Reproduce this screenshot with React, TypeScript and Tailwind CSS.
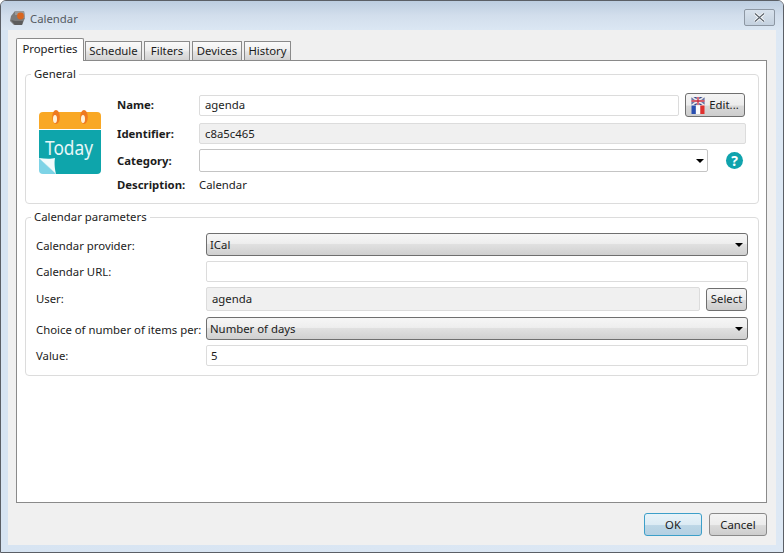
import React from "react";

const ff = "font-['Noto_Sans','Open_Sans',sans-serif]";
const gloss = "bg-[linear-gradient(#f6f6f6_0%,#eeeeee_45%,#e0e0e0_50%,#d0d0d0_100%)]";

function Tab({ label, w, active }: { label: string; w: string; active?: boolean }) {
  if (active)
    return (
      <div className={`${w} h-[23px] mr-[1px] relative z-10 bg-white border border-[#8a8a8a] border-b-0 rounded-t-[2px] flex justify-center pt-[1px] text-[#1c1c1c]`}>
        {label}
      </div>
    );
  return (
    <div className={`${w} h-[19px] mt-[3px] mr-[2px] border border-[#8a8a8a] border-b-0 rounded-t-[1px] bg-[linear-gradient(#fafafa_0%,#f0f0f0_45%,#e4e4e4_55%,#d2d2d2_100%)] flex justify-center items-center pb-[1px] text-[#1c1c1c]`}>
      {label}
    </div>
  );
}

function Input({ value, className = "", disabled }: { value?: string; className?: string; disabled?: boolean }) {
  return (
    <div className={`${className} border border-[#dcdcdc] rounded-[2px] flex items-center ${disabled ? "bg-[#f0f0f0]" : "bg-white"} text-[#1c1c1c]`}>
      {value}
    </div>
  );
}

function Caret() {
  return <div className="w-0 h-0 border-x-[4px] border-x-transparent border-t-[4px] border-t-black" />;
}

function DropSelect({ value, className = "" }: { value: string; className?: string }) {
  return (
    <div className={`${className} h-[23px] w-[542px] border border-[#6f6f6f] rounded-[3px] ${gloss} flex items-center justify-between pt-[1px] pl-[3px] pr-[4px] text-[#1c1c1c]`}>
      <span>{value}</span>
      <Caret />
    </div>
  );
}

function Flag() {
  return (
    <svg width="14" height="17" viewBox="0 0 14 17">
      <rect x="0.5" y="0" width="13" height="8" rx="1" fill="#3a4a8c" />
      <path d="M1 0l12 8M13 0L1 8" stroke="#e8e8e8" strokeWidth="1.6" />
      <path d="M7 0v8M0.5 4h13" stroke="#f4f4f4" strokeWidth="2.6" />
      <path d="M7 0v8M0.5 4h13" stroke="#c8283c" strokeWidth="1.3" />
      <rect x="0.5" y="8.5" width="4.4" height="8.5" fill="#2a4fb0" />
      <rect x="4.9" y="8.5" width="4.4" height="8.5" fill="#fbfbfb" />
      <rect x="9.3" y="8.5" width="4.2" height="8.5" fill="#e0312f" />
    </svg>
  );
}

function CalendarIcon() {
  return (
    <svg width="62" height="65" viewBox="0 0 62 65" className="block">
      <path d="M0 7a4 4 0 0 1 4-4h54a4 4 0 0 1 4 4v13H0z" fill="#f9a825" />
      <path d="M0 21h62v40a4 4 0 0 1-4 4H17L0 49z" fill="#0ea5ab" />
      <path d="M0 49l17 16H4a4 4 0 0 1-4-4z" fill="#7dd3e6" />
      <path d="M0 49c6 1 13 1 16 0-1 5 0 12 1 16z" fill="#f2fbfc" />
      <ellipse cx="17" cy="8" rx="3.800" ry="7" fill="#ef7a22" />
      <ellipse cx="45" cy="8" rx="3.800" ry="7" fill="#ef7a22" />
      <ellipse cx="16" cy="10" rx="2" ry="4" fill="#fff3dc" />
      <ellipse cx="44" cy="10" rx="2" ry="4" fill="#fff3dc" />
      <text x="6" y="46" fontSize="19" fill="#e6f7f8" textLength="48" lengthAdjust="spacingAndGlyphs" fontFamily="'Noto Sans',sans-serif">Today</text>
    </svg>
  );
}

function AppLogo() {
  return (
    <svg width="16" height="16" viewBox="0 0 16 16">
      <path d="M1 6l4-5h9l1 7-3 7H4L0 11z" fill="#7b7b7b" />
      <path d="M5 1h9l1 7-3 0-2-3H5z" fill="#9a9a9a" />
      <circle cx="10.500" cy="6" r="3.400" fill="#d9651f" />
      <path d="M1 10l4 5h7l1-4H5z" fill="#5c5c5c" />
    </svg>
  );
}

function Legend({ text }: { text: string }) {
  return <legend className="ml-[5px] px-[3px] leading-[16px] text-[#1c1c1c]">{text}</legend>;
}

export default function App() {
  return (
    <div className={`${ff} text-[11.35px] w-[784px] h-[553px] flex flex-col border border-[#5b5f66] rounded-t-[6px] bg-[linear-gradient(90deg,#d7e4f2_0%,#dde8f4_100%)] overflow-hidden`}>
      <div className="h-[29px] shrink-0 flex items-center justify-between pl-[9px] pr-[8px] pt-[6px] bg-[linear-gradient(#bccde0_0%,#d2deec_50%,#dbe7f3_100%)]">
        <div className="flex items-center gap-[4px] text-[#555b62]">
          <AppLogo />
          <span>Calendar</span>
        </div>
        <div className="w-[31px] h-[17px] -mt-[3px] border border-[#8d97a3] rounded-[2px] bg-[linear-gradient(#d8e2ed,#c4d1df)] flex items-center justify-center">
          <svg width="13" height="11" viewBox="0 0 13 11">
            <path d="M2 1.500l9 8M11 1.500l-9 8" stroke="#fff" strokeWidth="3" />
            <path d="M2 1.500l9 8M11 1.500l-9 8" stroke="#59626c" strokeWidth="1.300" />
          </svg>
        </div>
      </div>

      <div className="flex-1 mx-[7px] mb-[7px] bg-[#f0f0f0] flex flex-col pt-[8px] px-[8px]">
        <div className="flex items-start h-[22px]">
          <Tab label="Properties" w="w-[68px]" active />
          <Tab label="Schedule" w="w-[57px]" />
          <Tab label="Filters" w="w-[46px]" />
          <Tab label="Devices" w="w-[50px]" />
          <Tab label="History" w="w-[47px]" />
        </div>

        <div className="h-[443px] w-[751px] border border-[#8a8a8a] bg-white pt-[5px] px-[8px] text-[#1c1c1c]">
          <fieldset className="w-[734px] h-[138px] border border-[#dcdcdc] rounded-[4px] flex">
            <Legend text="General" />
            <div className="flex">
              <div className="w-[91px] pl-[13px] pt-[27px]">
                <CalendarIcon />
              </div>
              <div className="flex flex-col font-bold w-[82px]">
                <div className="h-[21px] mt-[12px] flex items-center">Name:</div>
                <div className="h-[21px] mt-[8px] flex items-center">Identifier:</div>
                <div className="h-[23px] mt-[5px] flex items-center">Category:</div>
                <div className="h-[18px] mt-[4px] flex items-center">Description:</div>
              </div>
              <div className="flex flex-col font-normal w-[550px]">
                <div className="flex items-center mt-[11px] h-[24px]">
                  <Input value="agenda" className="w-[480px] h-[21px] pl-[5px]" />
                  <div className="ml-[6px] w-[60px] h-[24px] border border-[#6f6f6f] rounded-[3px] bg-[linear-gradient(#f4f4f4_0%,#ececec_50%,#d8d8d8_55%,#cdcdcd_100%)] flex items-center justify-center gap-[4px]">
                    <Flag />
                    <span>Edit...</span>
                  </div>
                </div>
                <Input value="c8a5c465" disabled className="w-[547px] h-[21px] mt-[6px] pl-[5px]" />
                <div className="flex items-center mt-[5px]">
                  <div className="w-[509px] h-[23px] border border-[#c4c4c4] rounded-[2px] bg-white flex items-center justify-end pr-[3px]">
                    <Caret />
                  </div>
                  <div className="ml-[18px] w-[17px] h-[17px] rounded-full bg-[#10a3ad] text-white font-bold text-[14px] leading-[17px] text-center">?</div>
                </div>
                <div className="h-[18px] mt-[4px] flex items-center">Calendar</div>
              </div>
            </div>
          </fieldset>

          <fieldset className="w-[734px] h-[167px] mt-[5px] border border-[#dcdcdc] rounded-[4px]">
            <Legend text="Calendar parameters" />
            <div className="flex">
              <div className="w-[180px] pl-[10px] flex flex-col">
                <div className="h-[23px] mt-[9px] flex items-center">Calendar provider:</div>
                <div className="h-[21px] mt-[4px] flex items-center">Calendar URL:</div>
                <div className="h-[24px] mt-[5px] flex items-center">User:</div>
                <div className="h-[23px] mt-[7px] flex items-center whitespace-nowrap">Choice of number of items per:</div>
                <div className="h-[21px] mt-[4px] flex items-center">Value:</div>
              </div>
              <div className="flex flex-col w-[545px]">
                <DropSelect value="ICal" className="mt-[8px]" />
                <Input className="w-[542px] h-[21px] mt-[5px]" />
                <div className="flex items-center mt-[5px] h-[24px]">
                  <Input value="agenda" disabled className="w-[494px] h-[24px] pl-[5px] pb-[1px]" />
                  <div className="ml-[6px] w-[41px] h-[23px] border border-[#6f6f6f] rounded-[3px] bg-[linear-gradient(#f6f6f6_0%,#ececec_50%,#dadada_55%,#cdcdcd_100%)] flex items-center justify-center">Select</div>
                </div>
                <DropSelect value="Number of days" className="mt-[6px]" />
                <Input value="5" className="w-[542px] h-[21px] mt-[5px] pl-[4px]" />
              </div>
            </div>
          </fieldset>
        </div>

        <div className="flex justify-end gap-[7px] pt-[10px] pr-[1px] text-[#1c1c1c]">
          <div className="w-[58px] h-[23px] border border-[#3c9fc9] rounded-[3px] bg-[linear-gradient(#e8f3f9_0%,#dcebf4_50%,#bcd6e6_55%,#b4d0e2_100%)] flex items-center justify-center">OK</div>
          <div className="w-[58px] h-[23px] border border-[#8a8a8a] rounded-[3px] bg-[linear-gradient(#f4f4f4_0%,#ececec_50%,#dadada_55%,#cdcdcd_100%)] flex items-center justify-center">Cancel</div>
        </div>
      </div>
    </div>
  );
}
